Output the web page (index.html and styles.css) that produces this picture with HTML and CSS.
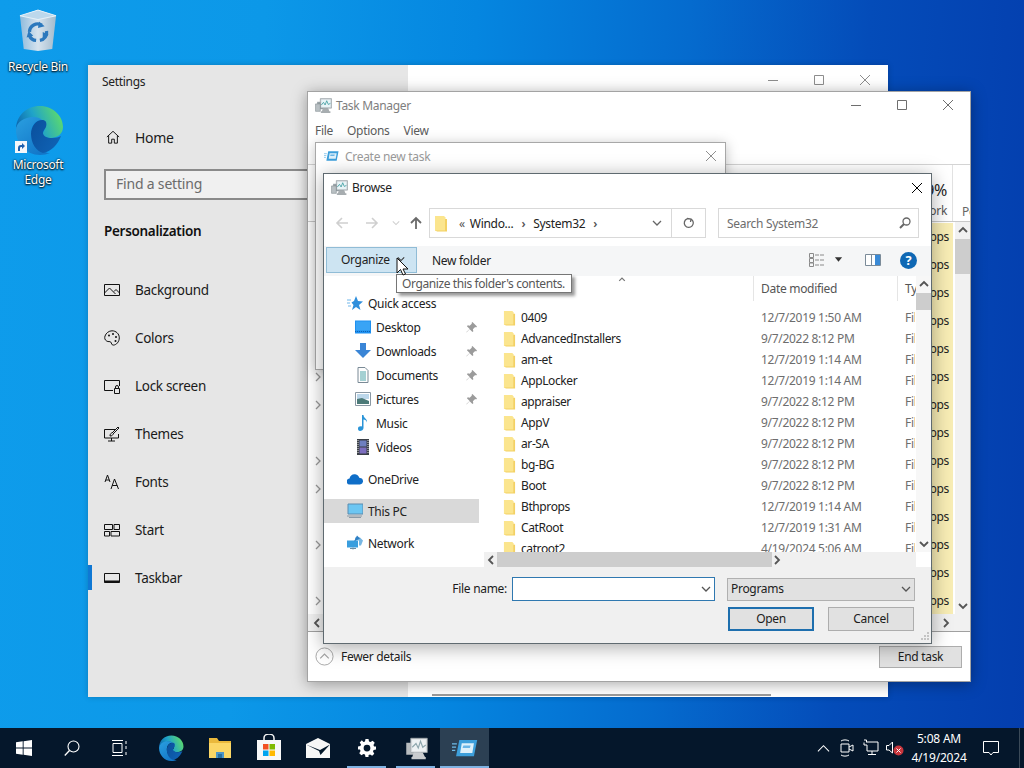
FILE: index.html
```html
<!DOCTYPE html>
<html lang="en">
<head>
<meta charset="utf-8">
<title>Windows desktop</title>
<link rel="stylesheet" href="styles.css">
</head>
<body>
<svg class="defs" width="0" height="0" aria-hidden="true">
  <defs>
    <linearGradient id="edgeTop" x1="0" y1="0.7" x2="1" y2="0.4"><stop offset="0" stop-color="#0b62ad"/><stop offset="0.45" stop-color="#1fa3c9"/><stop offset="1" stop-color="#5ddb6c"/></linearGradient>
    <linearGradient id="edgeLeft" x1="0" y1="0" x2="0.7" y2="1"><stop offset="0" stop-color="#2a9fe0"/><stop offset="1" stop-color="#1276c8"/></linearGradient>
    <linearGradient id="edgeWave" x1="0" y1="0" x2="1" y2="0.6"><stop offset="0" stop-color="#0a4f9c"/><stop offset="1" stop-color="#0f62b4"/></linearGradient>
    <linearGradient id="binBody" x1="0" y1="0" x2="1" y2="0"><stop offset="0" stop-color="#8fbbdc"/><stop offset="0.5" stop-color="#d6e3ee"/><stop offset="1" stop-color="#a3bbcd"/></linearGradient>
    <symbol id="folder" viewBox="0 0 14 17"><path d="M1 1h9l1.500 1.500V16H1z" fill="#fbe58e"/><path d="M11 4h2v12.500H3L1.500 15.500H11z" fill="#f3d163"/></symbol>
    <symbol id="pin" viewBox="0 0 12 12"><path d="M7 0l5 5-1 1-1-.5L7.500 8l.5 2-1 1-3-3-3.500 3.500L.5 11 4 7.500 1 4.500l1-1 2 .5L6.500 1.500 6 1z" fill="#9b9b9b"/></symbol>
    <symbol id="edge" viewBox="0 0 48 50">
      <path d="M1 25C1 11 11 1 25 1c13 0 23 10 23 21 0 7-6 11-12 11-5 0-9-2-9-4 0-2 3-2 3-7 0-6-6-10-12-9C9 14 1 19 1 25z" fill="url(#edgeTop)"/>
      <path d="M1 25c0-8 9-13 17-13 4 0 7 1 9 3-7 0-11 6-11 13 0 9 7 16 14 19 2 1 4 1 5 1-3 1-6 2-10 2C11 50 1 38 1 25z" fill="url(#edgeLeft)"/>
      <path d="M16 29c0-8 5-14 11-14 2 0 3 .5 4 2 .500 1.500.5 3 0 5-1 2-3 4-3 6 0 3 4 5 9 5 4 0 7-1 9-2-3 8-10 16-18 17-7-2-12-10-12-19z" fill="url(#edgeWave)"/>
    </symbol>
    <symbol id="tm" viewBox="0 0 32 32">
      <path d="M4 9h20v14H4z" fill="#9aa3a8"/><path d="M10 3h21v18H10z" fill="#cfd6da" stroke="#7d868b"/><path d="M12 5h17v14H12z" fill="#e9f4f7"/><path d="M12 15l4-5 3 5 3-8 3 7 4-2" fill="none" stroke="#3a9a9e" stroke-width="1.500"/><path d="M15 21h10l2 6H13zM11 27h18v3H11z" fill="#a7adb0"/><path d="M1 13h9v14H1z" fill="#b9c0c4" stroke="#7d868b"/>
    </symbol>
    <symbol id="tm-light" viewBox="0 0 32 32">
      <path d="M3 9h20v16H3z" fill="#b8bcbf"/><path d="M9 3h22v19H9z" fill="#dfe2e4" stroke="#9ea5a9"/><path d="M11 5h18v15H11z" fill="#eef2f4"/><path d="M11 15l5-5 3 6 3-9 3 8 4-3" fill="none" stroke="#8da6ad" stroke-width="1.500"/><path d="M13 22h12l3 6H11zM10 28h19v3H10z" fill="#c9cccf"/>
    </symbol>
    <symbol id="run" viewBox="0 0 32 24">
      <path d="M9 2h22l-4 20H5z" fill="#3d9fdb"/><path d="M12 6h15l-2 12H10z" fill="#dff1fb"/><path d="M14 9h9l-1 3h-9z" fill="#6bb6e6"/><path d="M0 7h6M0 11h5M0 15h4" stroke="#6fbbe8" stroke-width="1.500"/>
    </symbol>
    <symbol id="chev" viewBox="0 0 10 10"><path d="M1 7l4-4 4 4" fill="none" stroke="currentColor" stroke-width="1.800"/></symbol>
    <symbol id="caret" viewBox="0 0 10 10"><path d="M1 3l4 4 4-4" fill="none" stroke="currentColor" stroke-width="1.300"/></symbol>
    <symbol id="win-min" viewBox="0 0 12 12"><path d="M1 6.500h10" stroke="currentColor" fill="none"/></symbol>
    <symbol id="win-max" viewBox="0 0 12 12"><path d="M1.500 1.500h9v9h-9z" stroke="currentColor" fill="none"/></symbol>
    <symbol id="win-close" viewBox="0 0 12 12"><path d="M1 1l10 10M11 1L1 11" stroke="currentColor" fill="none"/></symbol>
  </defs>
</svg>

<div class="desktop">
  <main class="wallpaper">
    <div class="desk-icon bin-pos">
      <svg class="bin-glyph" viewBox="0 0 40 44"><path d="M1 7L20 1l19 6-4 35-15 2-15-2z" fill="url(#binBody)"/><path d="M1 7l19 4 19-4-19-6z" fill="#bcd8ec" stroke="#e8f2f9"/><g fill="none" stroke="#2b78bd" stroke-width="3.500"><path d="M11 24a8.500 8.500 0 0 1 13-7"/><path d="M29 23a8.500 8.500 0 0 1-7 10"/><path d="M18 33a8.500 8.500 0 0 1-7-5"/></g><path d="M21 13l6 5-7 2zM31 27l-6 4 0-7zM8 30l2-7 5 5z" fill="#2b78bd"/></svg>
      <span class="desk-label">Recycle Bin</span>
    </div>
    <div class="desk-icon edge-pos">
      <span class="edge-wrap">
        <svg class="edge-glyph"><use href="#edge"/></svg>
        <svg class="shortcut" viewBox="0 0 12 12"><path d="M0 0h12v12H0z" fill="#f4f7fa"/><path d="M3 10V7c0-2 1-3 3-3h1V2l3 3-3 3V6H6C5 6 5 7 5 8v2z" fill="#1d5fae"/></svg>
      </span>
      <span class="desk-label">Microsoft<br>Edge</span>
    </div>

    <section class="window settings">
      <aside class="set-side">
        <div class="set-title">Settings</div>
        <div class="set-home">
          <svg class="set-icon" viewBox="0 0 16 16"><path d="M1 8l7-6.500L15 8M3 6.500V15h3.500v-4.500h3V15H13V6.500" fill="none" stroke="#111" stroke-width="1.100"/></svg>
          <span>Home</span>
        </div>
        <div class="set-search">Find a setting</div>
        <h2 class="set-head">Personalization</h2>
        <nav class="set-nav">
          <div class="set-item"><svg class="set-icon" viewBox="0 0 16 16"><path d="M.5 2.500h15v11H.5z M.5 11l5-5 6 6M10 9.500l2-2 3.500 3.500" fill="none" stroke="#111"/></svg><span>Background</span></div>
          <div class="set-item"><svg class="set-icon" viewBox="0 0 16 16"><path d="M8 .8c4 0 7.300 3 7.300 7s-3 7.300-6 7.300c-2 0-1.500-2-2.500-3s-2.500 0-4-1C.5 9.800.5 8 1 6 2 3 5 .8 8 .8z" fill="none" stroke="#111"/><circle cx="5" cy="5.500" r="1" fill="#111"/><circle cx="9" cy="4" r="1" fill="#111"/><circle cx="12" cy="7" r="1" fill="#111"/><circle cx="11.500" cy="11" r="1" fill="#111"/></svg><span>Colors</span></div>
          <div class="set-item"><svg class="set-icon" viewBox="0 0 16 16"><path d="M9 12.500H.5v-10h15V8" fill="none" stroke="#111"/><path d="M10.500 10.500h5v5h-5zM11.500 10.500V9a1.500 1.500 0 0 1 3 0v1.500" fill="none" stroke="#111"/></svg><span>Lock screen</span></div>
          <div class="set-item"><svg class="set-icon" viewBox="0 0 16 16"><path d="M11 3.500H.5V12h14V8M7.500 12v3M4 15h7" fill="none" stroke="#111"/><path d="M6 10c0-2 1-3 2-3l6-6 1 1-6 6c0 1-1 2-3 2z" fill="none" stroke="#111"/></svg><span>Themes</span></div>
          <div class="set-item"><svg class="set-icon" viewBox="0 0 16 16"><path d="M1 8l2.500-7L6 8M1.800 6h3.400M7 15l3.500-10L14.500 15M8.200 11.500h5" fill="none" stroke="#111"/></svg><span>Fonts</span></div>
          <div class="set-item"><svg class="set-icon" viewBox="0 0 16 16"><path d="M.5 2.500h8v5h-8zM10 2.500h5.500v5H10zM.5 9.500h5v4.500h-5zM7 9.500h8.500v4.500H7z" fill="none" stroke="#111"/></svg><span>Start</span></div>
          <div class="set-item current"><svg class="set-icon" viewBox="0 0 16 16"><path d="M.5 3.500h15v9H.5z" fill="none" stroke="#111"/><path d="M.5 10.500h15v2H.5z" fill="#111"/></svg><span>Taskbar</span></div>
        </nav>
      </aside>
      <div class="set-main">
        <div class="caption-btns faded">
          <span class="cap"><svg class="cap-glyph"><use href="#win-min"/></svg></span>
          <span class="cap"><svg class="cap-glyph"><use href="#win-max"/></svg></span>
          <span class="cap"><svg class="cap-glyph"><use href="#win-close"/></svg></span>
        </div>
        <div class="set-peek"></div>
      </div>
    </section>

    <section class="window taskmgr">
      <header class="tm-title">
        <svg class="small-icon"><use href="#tm"/></svg>
        <span class="tm-name">Task Manager</span>
        <div class="caption-btns tm-caps">
          <span class="cap"><svg class="cap-glyph"><use href="#win-min"/></svg></span>
          <span class="cap"><svg class="cap-glyph"><use href="#win-max"/></svg></span>
          <span class="cap"><svg class="cap-glyph"><use href="#win-close"/></svg></span>
        </div>
      </header>
      <div class="tm-menu"><span>File</span><span>Options</span><span>View</span></div>
      <div class="tm-tabs"></div>
      <div class="tm-head">
        <div class="tm-col"><b>9%</b><span>Network</span></div>
        <div class="tm-col2">Power usage</div>
      </div>
      <div class="tm-body">
        <div class="tm-rows">
          <div class="tm-row"><span class="tm-cell">0 Mbps</span></div>
          <div class="tm-row"><span class="tm-cell">0 Mbps</span></div>
          <div class="tm-row"><span class="tm-cell">0 Mbps</span></div>
          <div class="tm-row"><span class="tm-cell">0 Mbps</span></div>
          <div class="tm-row"><span class="tm-cell">0 Mbps</span></div>
          <div class="tm-row"><svg class="tm-exp"><use href="#caret"/></svg><span class="tm-cell">0 Mbps</span></div>
          <div class="tm-row"><svg class="tm-exp"><use href="#caret"/></svg><span class="tm-cell">0 Mbps</span></div>
          <div class="tm-row"><span class="tm-cell">0 Mbps</span></div>
          <div class="tm-row"><svg class="tm-exp"><use href="#caret"/></svg><span class="tm-cell">0 Mbps</span></div>
          <div class="tm-row"><svg class="tm-exp"><use href="#caret"/></svg><span class="tm-cell">0 Mbps</span></div>
          <div class="tm-row"><span class="tm-cell">0 Mbps</span></div>
          <div class="tm-row"><svg class="tm-exp"><use href="#caret"/></svg><span class="tm-cell">0 Mbps</span></div>
          <div class="tm-row"><span class="tm-cell">0 Mbps</span></div>
          <div class="tm-row"><svg class="tm-exp"><use href="#caret"/></svg><span class="tm-cell">0 Mbps</span></div>
        </div>
        <div class="vbar tm-vbar">
          <svg class="bar-arrow"><use href="#chev"/></svg>
          <div class="vthumb tm-thumb"></div>
          <svg class="bar-arrow flip push"><use href="#chev"/></svg>
        </div>
      </div>
      <div class="tm-hbar">
        <svg class="bar-arrow turn-l"><use href="#chev"/></svg>
        <svg class="bar-arrow turn-r"><use href="#chev"/></svg>
      </div>
      <footer class="tm-foot">
        <span class="fewer"><svg class="fewer-glyph" viewBox="0 0 20 20"><circle cx="10" cy="10" r="9" fill="#fff" stroke="#a5a5a5"/><path d="M5.500 12L10 7.500l4.500 4.500" fill="none" stroke="#a5a5a5" stroke-width="1.300"/></svg>Fewer details</span>
        <span class="btn end-task">End task</span>
      </footer>
    </section>

    <section class="window runbox">
      <header class="run-title">
        <svg class="run-small"><use href="#run"/></svg>
        <span>Create new task</span>
        <svg class="run-x"><use href="#win-close"/></svg>
      </header>
    </section>

    <section class="window browse">
      <header class="br-title">
        <svg class="small-icon"><use href="#tm"/></svg>
        <span>Browse</span>
        <svg class="br-x"><use href="#win-close"/></svg>
      </header>
      <div class="br-nav">
        <svg class="nav-arrow faint" viewBox="0 0 16 16"><path d="M14 8H3M8 3L3 8l5 5" fill="none" stroke="currentColor" stroke-width="1.600"/></svg>
        <svg class="nav-arrow faint gap" viewBox="0 0 16 16"><path d="M2 8h11M8 3l5 5-5 5" fill="none" stroke="currentColor" stroke-width="1.600"/></svg>
        <svg class="nav-drop faint" viewBox="0 0 10 10"><use href="#caret"/></svg>
        <svg class="nav-arrow up" viewBox="0 0 16 16"><path d="M8 14V3M3 8l5-5 5 5" fill="none" stroke="currentColor" stroke-width="1.800"/></svg>
        <div class="address">
          <svg class="addr-folder"><use href="#folder"/></svg>
          <span class="crumb-mark">«</span><span>Windo...</span>
          <span class="crumb-sep">›</span><span>System32</span>
          <span class="crumb-sep">›</span>
          <svg class="addr-drop"><use href="#caret"/></svg>
          <span class="addr-refresh"><svg class="refresh-glyph" viewBox="0 0 12 12"><path d="M4 1.500L8 2 7.500 5M8 2a4.500 4.500 0 1 1-4-.2" fill="none" stroke="#666" stroke-width="1.300"/></svg></span>
        </div>
        <div class="search">
          <span>Search System32</span>
          <svg class="search-glyph" viewBox="0 0 12 12"><circle cx="7.500" cy="4.500" r="3.500" fill="none" stroke="#666" stroke-width="1.300"/><path d="M5 7l-4 4" stroke="#666" stroke-width="2"/></svg>
        </div>
      </div>
      <div class="br-tools">
        <span class="organize">Organize<svg class="org-caret"><use href="#caret"/></svg></span>
        <span class="new-folder">New folder</span>
        <span class="tools-right">
          <svg class="view-glyph" viewBox="0 0 16 14"><path d="M.5.500h4v4h-4zM.5 5.500h4v4h-4zM.5 10h4v3.500h-4z" fill="none" stroke="#8a8a8a"/><path d="M6 2h4M11 2h4M6 7h4M11 7h4M6 12h4M11 12h4" stroke="#8a8a8a"/></svg>
          <svg class="view-drop" viewBox="0 0 10 6"><path d="M1 0h8L5 5z" fill="#333"/></svg>
          <svg class="pane-glyph" viewBox="0 0 16 12"><path d="M.5.500h15v11H.5z" fill="#fff" stroke="#7b8b99"/><path d="M10 1h5v10h-5z" fill="#3a8ad6"/><path d="M6.500 1v10" stroke="#7b8b99"/></svg>
          <svg class="help-glyph" viewBox="0 0 16 16"><circle cx="8" cy="8" r="8" fill="#0f68b4"/><text x="8" y="12.500" class="help-q">?</text></svg>
        </span>
      </div>
      <div class="br-main">
        <div class="tree">
          <div class="tree-row lead"><svg class="t-icon" viewBox="0 0 16 16"><path d="M9 1l2 5 5 .5-4 3.500 1.500 5L9 12l-4 3 1.500-5-2-2.500L7 6z" fill="#2f8fdc"/><path d="M0 5h4M0 8h3M1 11h3" stroke="#6fb6ea"/></svg><span>Quick access</span></div>
          <div class="tree-row sub"><svg class="t-icon" viewBox="0 0 16 13"><path d="M0 0h16v13H0z" fill="#1e90f0"/><path d="M1 1h14v9H1z" fill="#39a4f5"/><path d="M0 11h16" stroke="#0d62b4" stroke-dasharray="1 1"/></svg><span>Desktop</span><svg class="pin-glyph"><use href="#pin"/></svg></div>
          <div class="tree-row sub"><svg class="t-icon" viewBox="0 0 16 16"><path d="M5 0h6v7h5l-8 8-8-8h5z" fill="#3a85d6"/></svg><span>Downloads</span><svg class="pin-glyph"><use href="#pin"/></svg></div>
          <div class="tree-row sub"><svg class="t-icon" viewBox="0 0 16 16"><path d="M3 .5h7l3 3v12H3z" fill="#fdfdfd" stroke="#7a8a96"/><path d="M5 5h6M5 7h6M5 9h6M5 11h6M5 13h6" stroke="#4aa3a8"/></svg><span>Documents</span><svg class="pin-glyph"><use href="#pin"/></svg></div>
          <div class="tree-row sub"><svg class="t-icon" viewBox="0 0 16 14"><path d="M.5.500h15v13H.5z" fill="#fff" stroke="#8a98a3"/><path d="M2 2h12v5H2z" fill="#bcd7ea"/><path d="M2 7l5-1 7 3v3H2z" fill="#4c7a78"/></svg><span>Pictures</span><svg class="pin-glyph"><use href="#pin"/></svg></div>
          <div class="tree-row sub"><svg class="t-icon" viewBox="0 0 16 16"><path d="M7 0h1.500c0 3 4 3.500 3.500 7.500-.5-2-2-3-3.500-3V13c0 2-2 3-3.500 3S3 15 3 13.500 4.500 11 7 11.500z" fill="#2a94d8"/></svg><span>Music</span></div>
          <div class="tree-row sub"><svg class="t-icon" viewBox="0 0 16 16"><path d="M2 0h12v16H2z" fill="#3a3f47"/><path d="M4.500 1.500h7v6h-7z" fill="#6e7fbf"/><path d="M4.500 8.500h7v6h-7z" fill="#7d6ebf"/><path d="M3 1v14M13 1v14" stroke="#dcdcdc" stroke-dasharray="1 1"/></svg><span>Videos</span></div>
          <div class="tree-row lead spaced"><svg class="t-icon" viewBox="0 0 16 11"><path d="M3 11a3 3 0 0 1-.5-6C3 2 6 0 9 1c2 .5 3 2 3.500 3.500A3.200 3.200 0 0 1 13 11z" fill="#0f6ec8"/></svg><span>OneDrive</span></div>
          <div class="tree-row lead spaced selected"><svg class="t-icon" viewBox="0 0 16 14"><path d="M1 0h15v10H1z" fill="#6cc6f2" stroke="#5a8cb0"/><path d="M0 12h15M2 13.500h12" stroke="#8b9aa6"/></svg><span>This PC</span></div>
          <div class="tree-row lead spaced"><svg class="t-icon" viewBox="0 0 16 15"><path d="M0 5h11v7H0z" fill="#3a9ede"/><path d="M3 13h6M6 12v2" stroke="#6f8da3"/><path d="M8 2h5l3 3-2 5h-2V5H8z" fill="#77b7e3"/><path d="M7 6l3-6 3 3z" fill="#2f7fc4"/></svg><span>Network</span></div>
        </div>
        <div class="files">
          <div class="files-top">
            <div class="file-list">
              <div class="file-head">
                <span class="hd-name"><svg class="sort-glyph"><use href="#chev"/></svg></span>
                <span class="hd-date">Date modified</span>
                <span class="hd-type">Type</span>
              </div>
              <div class="file-row"><span class="f-name"><svg class="f-icon"><use href="#folder"/></svg>0409</span><span class="f-date">12/7/2019 1:50 AM</span><span class="f-type">File folder</span></div>
              <div class="file-row"><span class="f-name"><svg class="f-icon"><use href="#folder"/></svg>AdvancedInstallers</span><span class="f-date">9/7/2022 8:12 PM</span><span class="f-type">File folder</span></div>
              <div class="file-row"><span class="f-name"><svg class="f-icon"><use href="#folder"/></svg>am-et</span><span class="f-date">12/7/2019 1:14 AM</span><span class="f-type">File folder</span></div>
              <div class="file-row"><span class="f-name"><svg class="f-icon"><use href="#folder"/></svg>AppLocker</span><span class="f-date">12/7/2019 1:14 AM</span><span class="f-type">File folder</span></div>
              <div class="file-row"><span class="f-name"><svg class="f-icon"><use href="#folder"/></svg>appraiser</span><span class="f-date">9/7/2022 8:12 PM</span><span class="f-type">File folder</span></div>
              <div class="file-row"><span class="f-name"><svg class="f-icon"><use href="#folder"/></svg>AppV</span><span class="f-date">9/7/2022 8:12 PM</span><span class="f-type">File folder</span></div>
              <div class="file-row"><span class="f-name"><svg class="f-icon"><use href="#folder"/></svg>ar-SA</span><span class="f-date">9/7/2022 8:12 PM</span><span class="f-type">File folder</span></div>
              <div class="file-row"><span class="f-name"><svg class="f-icon"><use href="#folder"/></svg>bg-BG</span><span class="f-date">9/7/2022 8:12 PM</span><span class="f-type">File folder</span></div>
              <div class="file-row"><span class="f-name"><svg class="f-icon"><use href="#folder"/></svg>Boot</span><span class="f-date">9/7/2022 8:12 PM</span><span class="f-type">File folder</span></div>
              <div class="file-row"><span class="f-name"><svg class="f-icon"><use href="#folder"/></svg>Bthprops</span><span class="f-date">12/7/2019 1:14 AM</span><span class="f-type">File folder</span></div>
              <div class="file-row"><span class="f-name"><svg class="f-icon"><use href="#folder"/></svg>CatRoot</span><span class="f-date">12/7/2019 1:31 AM</span><span class="f-type">File folder</span></div>
              <div class="file-row"><span class="f-name"><svg class="f-icon"><use href="#folder"/></svg>catroot2</span><span class="f-date">4/19/2024 5:06 AM</span><span class="f-type">File folder</span></div>
            </div>
            <div class="vbar list-vbar">
              <svg class="bar-arrow"><use href="#chev"/></svg>
              <div class="vthumb list-thumb"></div>
              <svg class="bar-arrow flip push"><use href="#chev"/></svg>
            </div>
          </div>
          <div class="list-hbar">
            <svg class="bar-arrow turn-l"><use href="#chev"/></svg>
            <div class="hthumb"></div>
            <svg class="bar-arrow turn-r push-h"><use href="#chev"/></svg>
          </div>
        </div>
      </div>
      <div class="br-bottom">
        <div class="name-row">
          <span class="lift">File name:</span>
          <span class="name-input"><svg class="combo-caret"><use href="#caret"/></svg></span>
          <span class="type-combo"><span class="lift">Programs</span><svg class="combo-caret"><use href="#caret"/></svg></span>
        </div>
        <div class="btn-row">
          <span class="btn default"><span class="lift">Open</span></span>
          <span class="btn"><span class="lift">Cancel</span></span>
        </div>
        <svg class="grip" viewBox="0 0 12 12"><path d="M9 2h2v2H9zM6 5h2v2H6zM9 5h2v2H9zM3 8h2v2H3zM6 8h2v2H6zM9 8h2v2H9z" fill="#c4c4c4"/></svg>
      </div>
    </section>

    <div class="tooltip">Organize this folder's contents.</div>
    <svg class="cursor" viewBox="0 0 14 20"><path d="M1 1v15l3.500-3.500L7 18l2.500-1-2.500-5h5z" fill="#fff" stroke="#111"/></svg>
  </main>

  <footer class="taskbar">
    <span class="tb-btn wide"><svg class="tb-start" viewBox="0 0 16 16"><path d="M0 2.300l6.700-1v6.300H0zM7.600 1.200L16 0v7.600H7.600zM0 8.400h6.700v6.300L0 13.700zM7.600 8.400H16V16l-8.400-1.200z" fill="#fff"/></svg></span>
    <span class="tb-btn wide"><svg class="tb-search" viewBox="0 0 16 16"><circle cx="9.500" cy="6.500" r="5.500" fill="none" stroke="#fff" stroke-width="1.100"/><path d="M5.500 10.500L.8 15.500" stroke="#fff" stroke-width="1.300"/></svg></span>
    <span class="tb-btn wide"><svg class="tb-view" viewBox="0 0 16 16"><path d="M0 .5h11M0 15.500h11M1 3.500h9v9H1zM14 1v3M14 6v3M14 12v3" fill="none" stroke="#fff"/></svg></span>
    <span class="tb-btn app first"><svg class="tb-edge"><use href="#edge"/></svg></span>
    <span class="tb-btn app"><svg class="tb-folder" viewBox="0 0 24 20"><path d="M1 0h8l2 3h12v17H1z" fill="#eab93c"/><path d="M1 5h22v15H1z" fill="#fbd766"/><path d="M8 14h8v6H8z" fill="#4d96c8"/><path d="M10 16h4v4h-4z" fill="#2b6f9f"/></svg></span>
    <span class="tb-btn app"><svg class="tb-store" viewBox="0 0 24 26"><path d="M0 6h24v20H0z" fill="#f7f7f7"/><path d="M7 7V4a5 4 0 0 1 10 0v3" fill="none" stroke="#f7f7f7" stroke-width="1.500"/><path d="M6 10h5.500v5.500H6z" fill="#f25022"/><path d="M12.500 10H18v5.500h-5.500z" fill="#7fba00"/><path d="M6 16.500h5.500V22H6z" fill="#00a4ef"/><path d="M12.500 16.500H18V22h-5.500z" fill="#ffb900"/></svg></span>
    <span class="tb-btn app"><svg class="tb-mail" viewBox="0 0 24 20"><path d="M12 0l12 6v14H0V6z" fill="#f7f7f7"/><path d="M0 6.500L14 12l10-5.500L14.500 17 13 13z" fill="#04182b"/></svg></span>
    <span class="tb-btn app marked"><svg class="tb-gear" viewBox="0 0 24 24"><path d="M10 0h4l.7 3.200 2 .8L19.500 2.300l2.800 2.800-1.700 2.800.8 2L24 10v4l-3.200.7-.8 2 1.700 2.800-2.800 2.800-2.800-1.700-2 .8L14 24h-4l-.7-3.200-2-.8-2.800 1.700-2.800-2.800 1.700-2.800-.8-2L0 14v-4l3.200-.7.8-2-1.700-2.800 2.800-2.800L7.300 4l2-.8z" fill="#fff"/><circle cx="12" cy="12" r="4.500" fill="#04182b"/></svg></span>
    <span class="tb-btn app marked"><svg class="tb-tm"><use href="#tm-light"/></svg></span>
    <span class="tb-btn app active"><svg class="tb-run"><use href="#run"/></svg></span>
    <div class="tray">
      <svg class="tr-chev" viewBox="0 0 14 14"><path d="M1 10l6-6 6 6" fill="none" stroke="#fff" stroke-width="1.100"/></svg>
      <span class="tr-slot"><svg class="tr-glyph" viewBox="0 0 16 18"><path d="M2 5h8v8H2zM10 8l4-2v6l-4-2" fill="none" stroke="#fff"/><path d="M2 2c2-1.500 6-1.500 8 0M2 16c2 1.500 6 1.500 8 0" fill="none" stroke="#fff"/></svg></span>
      <span class="tr-slot"><svg class="tr-glyph" viewBox="0 0 16 18"><path d="M1 1h2.500v2.500M4 3h11v9H4V6M9 12v3M5 15.500h8M1 3.500V6h3" fill="none" stroke="#fff"/></svg></span>
      <span class="tr-slot"><svg class="tr-sound" viewBox="0 0 18 16"><path d="M.5 5.500h2.500l3.500-3.500v11L3 10H.5z" fill="none" stroke="#fff"/><circle cx="12.500" cy="10.500" r="5" fill="#c8353c"/><path d="M10.500 8.500l4 4M14.500 8.500l-4 4" stroke="#fff"/></svg></span>
      <div class="clock"><span>5:08 AM</span><span>4/19/2024</span></div>
      <span class="notify"><svg class="notify-glyph" viewBox="0 0 16 16"><path d="M.5 1.500h15v11H10l-2 2.500-2-2.500H.5z" fill="none" stroke="#fff"/></svg></span>
      <span class="show-desk"></span>
    </div>
  </footer>
</div>
</body>
</html>
```

FILE: styles.css
```css
* { box-sizing: border-box; }
html, body { margin: 0; height: 100%; }
body {
  font-family: "Noto Sans", "Liberation Sans", sans-serif;
  font-size: 12px;
  letter-spacing: -0.3px;
  color: #1c1c1c;
  overflow: hidden;
}
svg { display: block; flex: none; }
.defs { position: absolute; }
.lift { display: block; margin-top: -2px; }

.desktop { width: 1024px; height: 768px; display: flex; flex-direction: column; }
.wallpaper {
  position: relative;
  flex: 1;
  overflow: hidden;
  background: linear-gradient(93deg, #0e9ceb 0%, #0c98e8 25%, #0586e0 45%, #056bce 65%, #044cb9 82%, #043eae 100%);
}

/* desktop icons */
.desk-icon { position: absolute; width: 76px; display: flex; flex-direction: column; align-items: center; }
.bin-pos { left: 0; top: 9px; }
.edge-pos { left: 0; top: 105px; }
.desk-label { color: #fff; text-align: center; line-height: 15px; text-shadow: 0 1px 2px #000, 0 0 2px #000; }
.bin-glyph { width: 38px; height: 42px; margin-bottom: 8px; }
.edge-wrap { position: relative; display: block; width: 48px; height: 50px; margin: 0 0 2px 2px; }
.edge-glyph { width: 48px; height: 50px; }
.shortcut { position: absolute; left: 0; bottom: 2px; width: 12px; height: 12px; }

/* windows on the desktop */
.window { position: absolute; background: #fff; }
.settings {
  left: 88px; top: 65px; width: 800px; height: 632px;
  display: flex;
  box-shadow: 0 0 6px rgba(0,0,0,.2);
}
.taskmgr {
  left: 307px; top: 91px; width: 664px; height: 591px;
  display: flex; flex-direction: column;
  border: 1px solid #a3a3a3;
  box-shadow: 0 2px 14px rgba(0,0,0,.35);
}
.runbox {
  left: 315px; top: 142px; width: 411px; height: 228px;
  border: 1px solid #a8a8a8;
  box-shadow: 0 2px 12px rgba(0,0,0,.25);
}
.browse {
  left: 323px; top: 173px; width: 609px; height: 471px;
  display: flex; flex-direction: column;
  border: 1px solid #5f6a70;
  box-shadow: 0 3px 18px rgba(0,0,0,.35);
}

/* caption buttons */
.caption-btns { display: flex; color: #6e6e6e; margin-left: auto; }
.caption-btns.faded { color: #8d8d8d; }
.tm-caps { margin-right: -1px; }
.cap { width: 46px; height: 30px; display: flex; align-items: center; justify-content: center; }
.cap-glyph { width: 12px; height: 12px; }

/* settings */
.set-side { width: 320px; background: #e6e6e6; display: flex; flex-direction: column; padding: 0 16px; position: relative; }
.set-title { height: 33px; padding-top: 9px; margin-left: -2px; line-height: 16px; color: #222; }
.set-home { display: flex; align-items: center; gap: 15px; margin-top: 19px; height: 40px; padding-left: 2px; font-size: 14px; }
.set-icon { width: 16px; height: 16px; }
.set-home .set-icon { width: 14px; }
.set-search {
  margin-top: 12px; height: 31px; width: 288px;
  border: 2px solid #8a8a8a; background: #f0f0f0;
  padding-left: 10px; font-size: 14px; line-height: 26px; color: #6b6b6b;
  letter-spacing: -0.2px;
}
.set-head { margin: 21px 0 0; height: 21px; font-size: 13.5px; line-height: 21px; font-weight: 600; color: #111; letter-spacing: -0.3px; }
.set-nav { margin-top: 24px; display: flex; flex-direction: column; }
.set-item { height: 48px; display: flex; align-items: center; gap: 15px; font-size: 13.5px; color: #1a1a1a; letter-spacing: -0.3px; }
.set-item.current { position: relative; }
.set-item.current::before {
  content: ""; position: absolute; left: -16px; top: 11px; width: 4px; height: 25px; background: #0f78d4;
}
.set-main { flex: 1; display: flex; flex-direction: column; }
.set-main .caption-btns { height: 32px; }
.set-peek { margin: auto 117px 0 24px; height: 3px; border-top: 2px solid #9b9b9b; background: #fff; }

/* task manager */
.tm-title { display: flex; align-items: center; height: 26px; padding-left: 7px; color: #7e7e7e; flex: none; }
.small-icon { width: 17px; height: 17px; }
.tm-name { margin-left: 4px; }
.tm-menu { height: 24px; flex: none; display: flex; align-items: center; gap: 14px; padding-left: 7px; color: #5c5c5c; }
.tm-tabs { height: 23px; flex: none; border-bottom: 1px solid #d4d4d4; }
.tm-head { height: 57px; flex: none; display: flex; justify-content: flex-end; border-bottom: 1px solid #c9c9c9; overflow: hidden; }
.tm-col { width: 70px; border-right: 1px solid #e2e2e2; padding: 15px 5px 0 0; display: flex; flex-direction: column; align-items: flex-end; color: #555; }
.tm-col b { font-size: 16px; line-height: 20px; font-weight: 400; color: #222; }
.tm-col span { line-height: 16px; margin-top: 3px; }
.tm-col2 { width: 17px; white-space: nowrap; overflow: hidden; padding: 38px 0 0 9px; color: #666; }
.tm-body { display: flex; height: 392px; flex: none; }
.tm-rows { flex: 1; display: flex; flex-direction: column; padding-top: 1px; overflow: hidden; }
.tm-row { height: 28px; display: flex; align-items: center; justify-content: flex-end; flex: none; position: relative; }
.tm-cell {
  width: 60px; height: 100%; background: #f8edb5; border-right: 1px solid #fff;
  text-align: right; line-height: 28px; padding-right: 4px; color: #222; margin-right: 1px;
}
.tm-exp { position: absolute; left: 5px; top: 9px; width: 10px; height: 10px; color: #9a9a9a; transform: rotate(-90deg); }
.vbar { width: 15px; flex: none; background: #f0f0f0; display: flex; flex-direction: column; align-items: center; color: #555; }
.tm-vbar { background: #f1f1f1; }
.bar-arrow { width: 10px; height: 10px; margin: 3px 0; color: #555; }
.bar-arrow.flip { transform: rotate(180deg); }
.bar-arrow.push { margin-top: auto; }
.vthumb { width: 15px; background: #cdcdcd; flex: none; }
.tm-thumb { height: 35px; margin-top: 1px; }
.tm-hbar { height: 18px; flex: none; background: #f1f1f1; display: flex; align-items: center; justify-content: space-between; padding: 0 19px 0 4px; border-bottom: 1px solid #a0a0a0; }
.turn-l { transform: rotate(-90deg); }
.turn-r { transform: rotate(90deg); }
.tm-foot { flex: 1; display: flex; align-items: center; justify-content: space-between; padding: 0 8px 0 7px; }
.fewer { display: flex; align-items: center; gap: 7px; color: #222; }
.fewer-glyph { width: 19px; height: 19px; }
.btn {
  display: flex; align-items: center; justify-content: center;
  width: 86px; height: 24px; background: #e1e1e1; border: 1px solid #adadad; color: #1c1c1c;
}
.end-task { width: 83px; height: 22px; }

/* create new task */
.run-title { height: 26px; display: flex; align-items: center; padding-left: 8px; gap: 6px; color: #9a9a9a; }
.run-small { width: 15px; height: 12px; }
.run-x { width: 12px; height: 12px; margin-left: auto; margin-right: 8px; color: #8f8f8f; }

/* browse */
.br-title { height: 27px; flex: none; display: flex; align-items: center; padding-left: 7px; gap: 4px; color: #222; }
.br-x { width: 12px; height: 12px; margin-left: auto; margin-right: 8px; color: #000; }
.br-nav { height: 30px; flex: none; margin-top: 7px; display: flex; align-items: center; padding-left: 10px; color: #222; }
.nav-arrow { width: 16px; height: 16px; }
.nav-arrow.gap { margin-left: 14px; }
.nav-arrow.up { margin-left: 8px; color: #6a6a6a; }
.nav-drop { width: 8px; height: 8px; margin-left: 12px; }
.faint { color: #cfcfcf; }
.address {
  width: 277px; height: 30px; margin-left: 5px;
  border: 1px solid #d9d9d9; display: flex; align-items: center; padding-left: 4px;
}
.addr-folder { width: 14px; height: 17px; }
.crumb-mark { margin: 0 5px 0 11px; color: #555; }
.crumb-sep { margin: 0 8px; color: #555; font-weight: 600; }
.addr-drop { width: 10px; height: 10px; margin-left: auto; color: #666; }
.addr-refresh { width: 34px; height: 28px; margin-left: 9px; border-left: 1px solid #d9d9d9; display: flex; align-items: center; justify-content: center; }
.refresh-glyph { width: 12px; height: 12px; }
.search {
  width: 201px; height: 30px; margin-left: 12px;
  border: 1px solid #d9d9d9; display: flex; align-items: center; justify-content: space-between; padding: 0 7px 0 8px; color: #6d6d6d;
}
.search-glyph { width: 12px; height: 12px; }
.br-tools { height: 30px; flex: none; margin-top: 8px; background: #f5f6f7; display: flex; align-items: center; padding: 0 0 2px 2px; }
.organize {
  width: 91px; height: 26px; background: #cde4f2; border: 1px solid #90bcd6;
  display: flex; align-items: center; padding: 0 0 2px 14px; color: #222; gap: 7px;
}
.org-caret { width: 8px; height: 8px; color: #333; }
.new-folder { margin-left: 15px; color: #222; }
.tools-right { margin-left: auto; display: flex; align-items: center; padding-right: 14px; }
.view-glyph { width: 16px; height: 14px; }
.view-drop { width: 9px; height: 6px; margin-left: 9px; }
.pane-glyph { width: 16px; height: 12px; margin-left: 22px; }
.help-glyph { width: 17px; height: 17px; margin-left: 19px; }
.help-q { fill: #fff; font-size: 12px; font-weight: 700; text-anchor: middle; }
.br-main { height: 291px; flex: none; display: flex; }
.tree { width: 155px; flex: none; padding-top: 15px; margin-right: 5px; display: flex; flex-direction: column; }
.tree-row { height: 24px; flex: none; display: flex; align-items: center; color: #222; position: relative; }
.tree-row.lead { padding-left: 23px; gap: 5px; }
.tree-row.sub { padding-left: 31px; gap: 5px; }
.tree-row.spaced { margin-top: 8px; }
.tree-row.selected { background: #d9d9d9; }
.t-icon { width: 16px; height: 16px; }
.pin-glyph { width: 11px; height: 11px; position: absolute; left: 142px; top: 7px; }
.files { flex: 1; min-width: 0; display: flex; flex-direction: column; }
.files-top { height: 276px; flex: none; display: flex; }
.file-list { flex: 1; min-width: 0; margin-left: 6px; overflow: hidden; }
.file-head { height: 31px; display: flex; color: #555; }
.file-head span { height: 25px; display: flex; align-items: center; flex: none; padding-left: 7px; overflow: hidden; }
.hd-name { width: 264px; justify-content: center; border-right: 1px solid #e5e5e5; align-items: flex-start !important; padding: 0 !important; }
.sort-glyph { width: 10px; height: 7px; color: #777; }
.hd-date { width: 144px; border-right: 1px solid #e5e5e5; }
.hd-type { width: 18px; white-space: nowrap; }
.file-row { height: 21px; display: flex; align-items: center; white-space: nowrap; }
.f-name { width: 271px; flex: none; display: flex; align-items: center; padding-left: 13px; gap: 5px; color: #222; letter-spacing: -0.4px; }
.f-icon { width: 13px; height: 16px; }
.f-date { width: 144px; flex: none; color: #6d6d6d; }
.f-type { width: 10px; flex: none; overflow: hidden; color: #6d6d6d; }
.list-vbar { background: #f7f7f7; }
.list-thumb { height: 17px; margin-top: 1px; }
.list-hbar { flex: 1; background: #f0f0f0; display: flex; align-items: center; width: 432px; padding-left: 2px; }
.hthumb { width: 275px; height: 15px; background: #cdcdcd; margin-left: 1px; }
.push-h { margin-left: 124px; }
.list-hbar .bar-arrow { margin: 0; }
.br-bottom { flex: 1; background: #f0f0f0; padding: 10px 16px 0 0; position: relative; }
.name-row { display: flex; align-items: center; height: 24px; justify-content: flex-end; }
.name-input {
  width: 203px; height: 24px; margin-left: 5px; background: #fff; border: 1px solid #2f78b0;
  display: flex; align-items: center; justify-content: flex-end; padding-right: 3px;
}
.type-combo {
  width: 188px; height: 23px; margin-left: 12px; background: #e1e1e1; border: 1px solid #b0b0b0;
  display: flex; align-items: center; justify-content: space-between; padding: 0 3px; color: #222;
}
.combo-caret { width: 10px; height: 10px; color: #555; }
.btn-row { display: flex; justify-content: flex-end; gap: 14px; margin-top: 6px; padding-right: 1px; }
.btn.default { border: 2px solid #1e6fae; }
.grip { position: absolute; right: 1px; bottom: 1px; width: 12px; height: 12px; }

/* overlays */
.tooltip {
  position: absolute; left: 396px; top: 274px; width: 176px; height: 19px;
  background: #fff; border: 1px solid #767676; box-shadow: 3px 3px 3px rgba(0,0,0,.4);
  padding-left: 5px; line-height: 17px; color: #575757; white-space: nowrap; letter-spacing: -0.4px;
}
.cursor { position: absolute; left: 396px; top: 257px; width: 14px; height: 20px; }

/* taskbar */
.taskbar { height: 40px; flex: none; display: flex; background: #05172b; color: #fff; }
.tb-btn { height: 40px; display: flex; align-items: center; justify-content: center; flex: none; position: relative; }
.tb-btn.wide { width: 48px; }
.tb-btn.app { width: 49px; }
.tb-btn.first { margin-left: 2px; }
.tb-btn.marked::after { content: ""; position: absolute; left: 5px; right: 5px; bottom: 0; height: 2px; background: #7fb2e2; }
.tb-btn.active { background: #2c4053; }
.tb-btn.active::after { content: ""; position: absolute; left: 0; right: 0; bottom: 0; height: 2px; background: #7fb2e2; }
.tb-start { width: 16px; height: 16px; }
.tb-search { width: 16px; height: 16px; }
.tb-view { width: 16px; height: 16px; }
.tb-edge { width: 26px; height: 26px; }
.tb-folder { width: 24px; height: 20px; }
.tb-store { width: 24px; height: 26px; margin-top: -3px; }
.tb-mail { width: 24px; height: 20px; }
.tb-gear { width: 18px; height: 18px; }
.tb-tm { width: 24px; height: 24px; }
.tb-run { width: 26px; height: 20px; }
.tray { margin-left: auto; display: flex; align-items: center; font-size: 12px; }
.tr-chev { width: 13px; height: 13px; margin-right: 5px; }
.tr-slot { width: 24px; height: 40px; display: flex; align-items: center; justify-content: center; }
.tr-glyph { width: 16px; height: 18px; }
.tr-sound { width: 18px; height: 16px; }
.clock { width: 64px; display: flex; flex-direction: column; align-items: center; line-height: 19px; white-space: nowrap; letter-spacing: -0.2px; }
.notify { width: 40px; height: 40px; display: flex; align-items: center; justify-content: center; }
.notify-glyph { width: 16px; height: 16px; }
.show-desk { width: 5px; height: 40px; margin-left: 8px; border-left: 1px solid #3b4a58; }
```
